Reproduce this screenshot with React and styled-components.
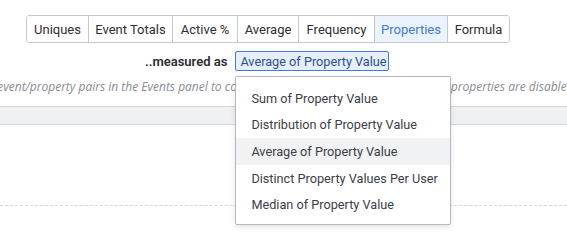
import React from 'react'
import styled, { createGlobalStyle } from 'styled-components'

const Global = createGlobalStyle`
  html, body {
    margin: 0;
    padding: 0;
    background: #fff;
    overflow: hidden;
  }
  body {
    font-family: Roboto, "Liberation Sans", sans-serif;
    color: #333;
  }
`

const Page = styled.div`
  width: 567px;
  height: 243px;
  display: flex;
  flex-direction: column;
`

const Toolbar = styled.div`
  display: flex;
  align-self: flex-start;
  margin: 15px 0 0 26px;
  height: 28px;
  border: 1px solid #c6c7cc;
  border-radius: 3px;
  box-sizing: border-box;
  overflow: hidden;
`

const Tab = styled.div`
  display: flex;
  align-items: center;
  justify-content: center;
  width: ${p => p.$w}px;
  box-sizing: border-box;
  font-size: 13px;
  color: ${p => (p.$active ? '#3d7be0' : '#2e2f33')};
  background: ${p => (p.$active ? '#ebf3fe' : '#fff')};
  border-left: ${p => (p.$first ? 'none' : '1px solid #c6c7cc')};
`

const MeasureRow = styled.div`
  display: flex;
  align-items: center;
  height: 20px;
  margin: 8px 0 0 145px;
  gap: 8px;
`

const Label = styled.span`
  font-size: 13px;
  font-weight: 600;
  color: #2a2b30;
  white-space: nowrap;
`

const SelectWrap = styled.div`
  position: relative;
`

const Select = styled.div`
  width: 154px;
  height: 20px;
  box-sizing: border-box;
  border: 1px solid #3d7be0;
  border-radius: 2px;
  background: #e7effd;
  color: #2d4f8c;
  font-size: 12.7px;
  white-space: nowrap;
  display: flex;
  align-items: center;
  padding-left: 4px;
`

const Menu = styled.div`
  position: absolute;
  top: 25px;
  left: 0;
  width: 216px;
  box-sizing: border-box;
  padding: 8px 0 6px;
  background: #fff;
  border: 1px solid #b8b7c2;
  border-radius: 2px;
  box-shadow: 0 2px 5px rgba(0, 0, 0, 0.12);
  z-index: 2;
`

const Item = styled.div`
  height: 26.6px;
  display: flex;
  align-items: center;
  padding-left: 15px;
  font-size: 12.7px;
  white-space: nowrap;
  color: #3b3e47;
  background: ${p => (p.$hover ? '#f1f2f4' : 'transparent')};
`

const Hint = styled.div`
  display: flex;
  justify-content: center;
  height: 16px;
  margin-top: 7px;
  white-space: nowrap;
  font-family: "Open Sans", "Liberation Sans", sans-serif;
  font-style: italic;
  font-size: 12px;
  color: #8a8b92;
`

const Band = styled.div`
  height: 17px;
  margin-top: 12px;
  background: #f0f1f3;
  border-top: 1px solid #d4d5d9;
  border-bottom: 1px solid #d4d5d9;
`

const Chart = styled.div`
  height: 80px;
  border-bottom: 1px dashed #d6d6da;
`

const tabs = [
  ['Uniques', 61],
  ['Event Totals', 84],
  ['Active %', 65],
  ['Average', 61],
  ['Frequency', 76],
  ['Properties', 73],
  ['Formula', 62],
]

const options = [
  'Sum of Property Value',
  'Distribution of Property Value',
  'Average of Property Value',
  'Distinct Property Values Per User',
  'Median of Property Value',
]

export default function App() {
  return (
    <>
      <Global />
      <Page>
        <Toolbar>
          {tabs.map(([name, w], i) => (
            <Tab key={name} $w={w} $first={i === 0} $active={name === 'Properties'}>
              {name}
            </Tab>
          ))}
        </Toolbar>
        <MeasureRow>
          <Label>..measured as</Label>
          <SelectWrap>
            <Select>Average of Property Value</Select>
            <Menu>
              {options.map(o => (
                <Item key={o} $hover={o === 'Average of Property Value'}>{o}</Item>
              ))}
            </Menu>
          </SelectWrap>
        </MeasureRow>
        <Hint>
          <span>Select event/property pairs in the Events panel to compare. Measurements needing numeric properties are disabled here.</span>
        </Hint>
        <Band />
        <Chart />
      </Page>
    </>
  )
}
